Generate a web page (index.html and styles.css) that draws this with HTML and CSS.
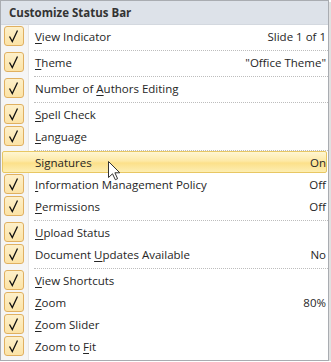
FILE: index.html
```html
<!DOCTYPE html>
<html>
<head>
<meta charset="utf-8">
<link rel="stylesheet" href="styles.css">
</head>
<body>
<div class="menu">
  <div class="title">Customize Status Bar</div>
  <div class="items">
    <div class="item"><span class="check"><svg viewBox="0 0 20 20"><path d="M5.5 10.5 L8.3 15.5 L13.5 4.5"/></svg></span><span class="label"><u>V</u>iew Indicator</span><span class="value">Slide 1 of 1</span></div>
    <div class="sep"></div>
    <div class="item"><span class="check"><svg viewBox="0 0 20 20"><path d="M5.5 10.5 L8.3 15.5 L13.5 4.5"/></svg></span><span class="label"><u>T</u>heme</span><span class="value">"Office Theme"</span></div>
    <div class="sep"></div>
    <div class="item"><span class="check"><svg viewBox="0 0 20 20"><path d="M5.5 10.5 L8.3 15.5 L13.5 4.5"/></svg></span><span class="label">Number of <u>A</u>uthors Editing</span><span class="value"></span></div>
    <div class="sep"></div>
    <div class="item"><span class="check"><svg viewBox="0 0 20 20"><path d="M5.5 10.5 L8.3 15.5 L13.5 4.5"/></svg></span><span class="label"><u>S</u>pell Check</span><span class="value"></span></div>
    <div class="item"><span class="check"><svg viewBox="0 0 20 20"><path d="M5.5 10.5 L8.3 15.5 L13.5 4.5"/></svg></span><span class="label"><u>L</u>anguage</span><span class="value"></span></div>
    <div class="sep"></div>
    <div class="item hover"><span class="check empty"></span><span class="label">Si<u>g</u>natures</span><span class="value">On</span></div>
    <div class="item"><span class="check"><svg viewBox="0 0 20 20"><path d="M5.5 10.5 L8.3 15.5 L13.5 4.5"/></svg></span><span class="label"><u>I</u>nformation Management Policy</span><span class="value">Off</span></div>
    <div class="item"><span class="check"><svg viewBox="0 0 20 20"><path d="M5.5 10.5 L8.3 15.5 L13.5 4.5"/></svg></span><span class="label"><u>P</u>ermissions</span><span class="value">Off</span></div>
    <div class="sep"></div>
    <div class="item"><span class="check"><svg viewBox="0 0 20 20"><path d="M5.5 10.5 L8.3 15.5 L13.5 4.5"/></svg></span><span class="label"><u>U</u>pload Status</span><span class="value"></span></div>
    <div class="item"><span class="check"><svg viewBox="0 0 20 20"><path d="M5.5 10.5 L8.3 15.5 L13.5 4.5"/></svg></span><span class="label">Document <u>U</u>pdates Available</span><span class="value">No</span></div>
    <div class="sep"></div>
    <div class="item"><span class="check"><svg viewBox="0 0 20 20"><path d="M5.5 10.5 L8.3 15.5 L13.5 4.5"/></svg></span><span class="label"><u>V</u>iew Shortcuts</span><span class="value"></span></div>
    <div class="item"><span class="check"><svg viewBox="0 0 20 20"><path d="M5.5 10.5 L8.3 15.5 L13.5 4.5"/></svg></span><span class="label"><u>Z</u>oom</span><span class="value">80%</span></div>
    <div class="item"><span class="check"><svg viewBox="0 0 20 20"><path d="M5.5 10.5 L8.3 15.5 L13.5 4.5"/></svg></span><span class="label"><u>Z</u>oom Slider</span><span class="value"></span></div>
    <div class="item"><span class="check"><svg viewBox="0 0 20 20"><path d="M5.5 10.5 L8.3 15.5 L13.5 4.5"/></svg></span><span class="label">Zoom to <u>F</u>it</span><span class="value"></span></div>
  </div>
  <svg class="cursor" width="13" height="20" viewBox="0 0 13 20"><path d="M0.5 0.5 L0.5 16.5 L4.5 12.8 L7.3 18.7 L9.6 17.7 L6.9 11.8 L11.8 11.8 Z"/></svg>
</div>
</body>
</html>
```
FILE: styles.css
```css
html, body {
  margin: 0;
  padding: 0;
  background: #ffffff;
}
body {
  font-family: "Open Sans", "Noto Sans", sans-serif;
  font-size: 11.5px;
  color: #262626;
}
.menu {
  position: relative;
  width: 327px;
  border: 1px solid #a9acb1;
  background: #ffffff;
  box-shadow: 2px 2px 0 rgba(0, 0, 0, 0.12);
}
.title {
  height: 23px;
  line-height: 23px;
  padding-left: 8px;
  font-weight: bold;
  color: #333333;
  background: #dde2e9;
  border-bottom: 1px solid #d3d8df;
}
.items {
  padding-bottom: 3px;
  background: linear-gradient(to right, #f5f5f5 0, #f5f5f5 27px, #e6e6e6 27px, #e6e6e6 28px, #ffffff 28px);
}
.item {
  display: flex;
  align-items: center;
  height: 20px;
  margin: 0 1px;
  border: 1px solid transparent;
  border-radius: 2px;
}
.item.hover {
  border-color: #e8c763;
  background: linear-gradient(to bottom, #fff6d2 0%, #fde9a6 45%, #fce08a 55%, #fdeeb2 100%);
}
.check {
  flex: none;
  width: 18px;
  height: 18px;
  margin-left: 1px;
  border: 1px solid #e0b060;
  border-radius: 3px;
  background: linear-gradient(to bottom, #fdf0ca, #fce3a6);
}
.check.empty {
  border-color: transparent;
  background: none;
}
.check svg {
  display: block;
  width: 20px;
  height: 20px;
  margin: -1px;
}
.check path {
  fill: none;
  stroke: #111111;
  stroke-width: 1.3;
}
.label {
  flex: 1;
  margin-left: 11px;
  white-space: nowrap;
}
.value {
  white-space: nowrap;
}
u {
  text-decoration-thickness: 1px;
  text-underline-offset: 2px;
}
.sep {
  height: 0;
  margin: 3px 0 0 33px;
  border-top: 1px dotted #bdbdbd;
}
.cursor {
  position: absolute;
  left: 107px;
  top: 160px;
}
.cursor path {
  fill: #ffffff;
  stroke: #333333;
  stroke-width: 1;
}
```
